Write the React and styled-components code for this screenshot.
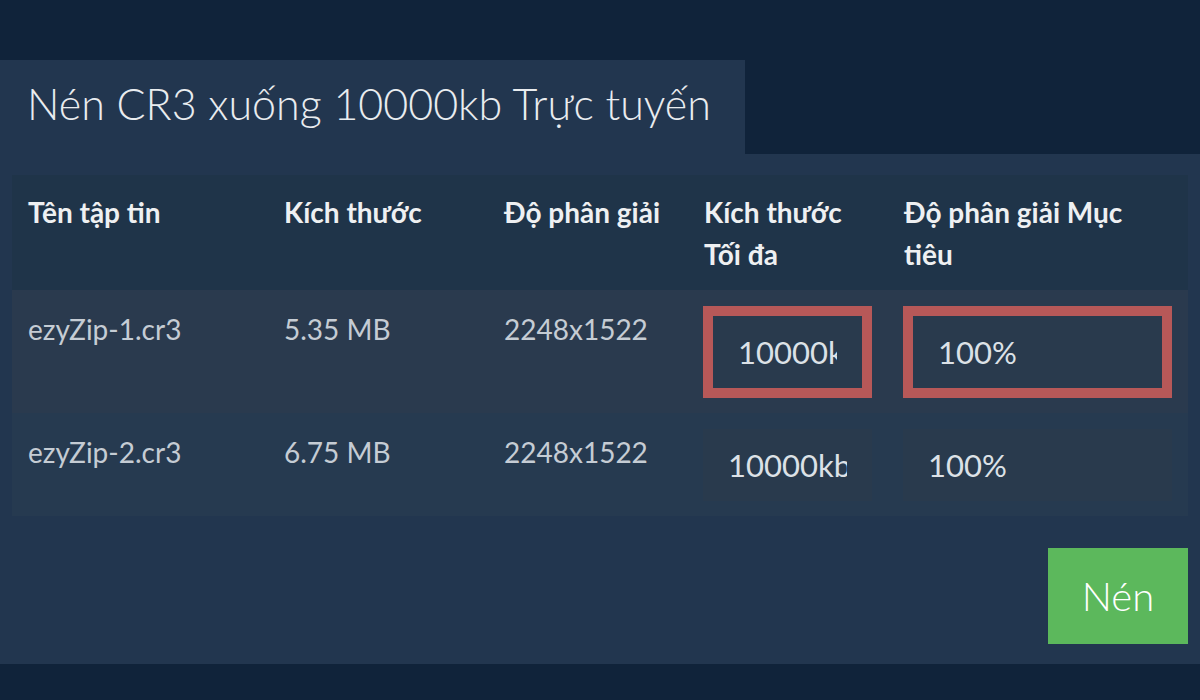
import React from "react";
import styled, { createGlobalStyle } from "styled-components";

const GlobalStyle = createGlobalStyle`
  body {
    margin: 0;
    background: #10233a;
    font-family: Lato, "Noto Sans", sans-serif;
  }
`;

const Page = styled.div`
  min-height: 700px;
  padding-top: 60px;
  box-sizing: border-box;
`;

const Tab = styled.div`
  width: 745px;
  height: 94px;
  display: flex;
  align-items: center;
  padding: 0 0 8px 27px;
  box-sizing: border-box;
  background: #22364f;
`;

const Title = styled.h1`
  margin: 0;
  font-size: 43px;
  font-weight: 300;
  color: #e9ecef;
  white-space: nowrap;
`;

const Panel = styled.section`
  height: 510px;
  padding: 21px 12px 0;
  box-sizing: border-box;
  background: #22364f;
`;

const Table = styled.table`
  width: 1176px;
  border-collapse: collapse;
  table-layout: fixed;
  font-size: 28px;
`;

const HeadRow = styled.tr`
  background: #1f3449;
`;

const Th = styled.th`
  padding: 16px 15px 15px 16px;
  text-align: left;
  vertical-align: top;
  font-weight: 700;
  line-height: 42px;
  color: #eef0f2;
`;

const Row = styled.tr`
  background: ${(p) => (p.$even ? "#263a50" : "#2a3a4e")};
`;

const Td = styled.td`
  padding: 16px 15px 15px 16px;
  vertical-align: ${(p) => (p.$middle ? "middle" : "top")};
  line-height: 46px;
  color: #c5ccd4;
`;

const SizeInput = styled.input`
  display: block;
  width: 100%;
  height: ${(p) => (p.$focused ? "92px" : "72px")};
  margin-left: -1px;
  box-sizing: border-box;
  padding: 0 25px;
  border: ${(p) => (p.$focused ? "10px solid #b75858" : "none")};
  background: #293a4d;
  color: #dce1e7;
  font-family: Lato, "Noto Sans", sans-serif;
  font-size: 31px;
  outline: none;
`;

const Actions = styled.div`
  display: flex;
  justify-content: flex-end;
  margin-top: 32px;
`;

const CompressButton = styled.button`
  width: 140px;
  height: 96px;
  border: none;
  background: #5cb85c;
  color: #fff;
  font-family: Lato, "Noto Sans", sans-serif;
  font-size: 40px;
  font-weight: 300;
  cursor: pointer;
`;

const files = [
  { name: "ezyZip-1.cr3", size: "5.35 MB", res: "2248x1522" },
  { name: "ezyZip-2.cr3", size: "6.75 MB", res: "2248x1522" },
];

const App = () => {
  return (
    <Page>
      <GlobalStyle />
      <Tab>
        <Title>Nén CR3 xuống 10000kb Trực tuyến</Title>
      </Tab>
      <Panel>
        <Table>
          <colgroup>
            <col style={{ width: 256 }} />
            <col style={{ width: 220 }} />
            <col style={{ width: 200 }} />
            <col style={{ width: 200 }} />
            <col style={{ width: 300 }} />
          </colgroup>
          <thead>
            <HeadRow>
              <Th>Tên tập tin</Th>
              <Th>Kích thước</Th>
              <Th>Độ phân giải</Th>
              <Th>Kích thước Tối đa</Th>
              <Th>Độ phân giải Mục tiêu</Th>
            </HeadRow>
          </thead>
          <tbody>
            {files.map((f, i) => (
              <Row key={f.name} $even={i % 2 === 1}>
                <Td>{f.name}</Td>
                <Td>{f.size}</Td>
                <Td>{f.res}</Td>
                <Td $middle>
                  <SizeInput $focused={i === 0} defaultValue="10000kb" />
                </Td>
                <Td $middle>
                  <SizeInput $focused={i === 0} defaultValue="100%" />
                </Td>
              </Row>
            ))}
          </tbody>
        </Table>
        <Actions>
          <CompressButton>Nén</CompressButton>
        </Actions>
      </Panel>
    </Page>
  );
};

export default App;
